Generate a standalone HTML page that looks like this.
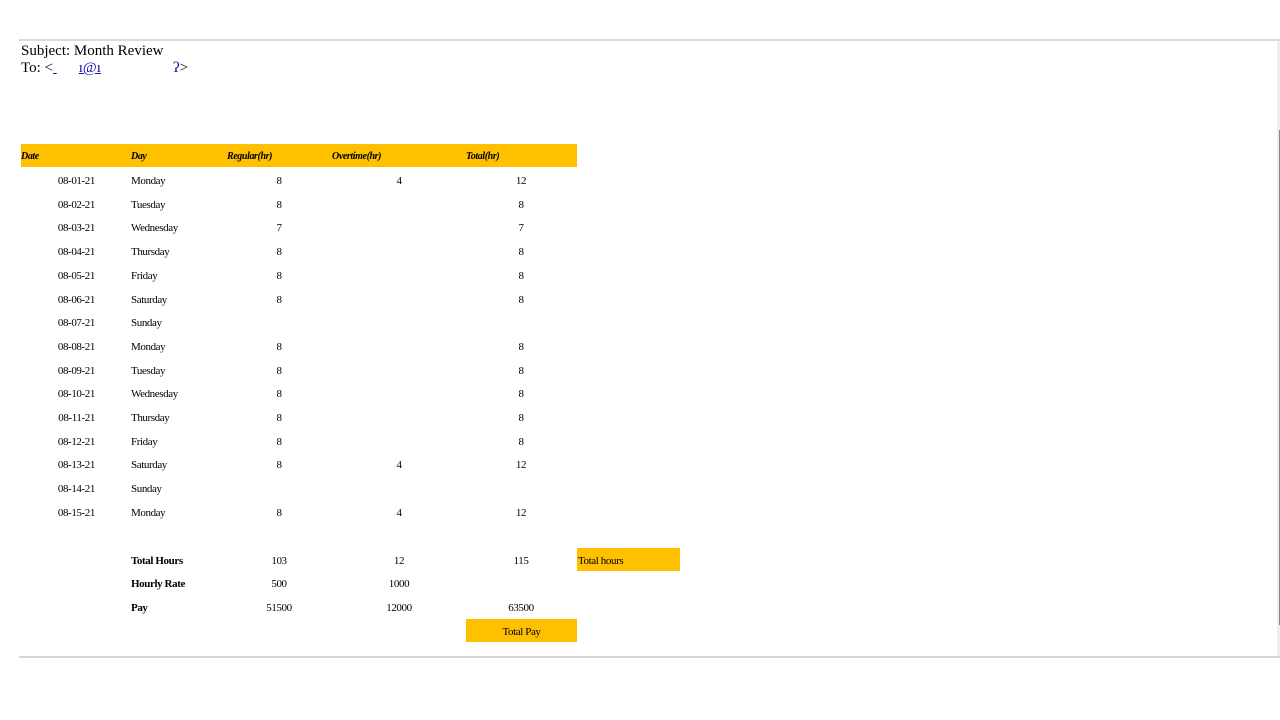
<!DOCTYPE html>
<html><head><meta charset="utf-8"><style>
body{margin:0;width:1280px;height:720px;background:#fff;position:relative;overflow:hidden;font-family:"Liberation Serif",serif;color:#000}
.a{position:absolute;white-space:nowrap;font-size:11px;line-height:14px;letter-spacing:-0.4px}
.r{text-align:right}.c{text-align:center}
.bar{position:absolute;background:#ffc000}
.h{font-weight:bold;font-style:italic;font-size:10px}
.b{font-weight:bold}
</style></head><body>
<div style="position:absolute;left:19px;top:39px;width:1261px;height:2px;background:#e2d8da"></div>
<div style="position:absolute;left:19px;top:656px;width:1261px;height:2px;background:#d4d4d4"></div>
<div style="position:absolute;left:1277px;top:41px;width:3px;height:615px;background:#eee"></div>
<div style="position:absolute;left:1279px;top:130px;width:1px;height:495px;background:#888"></div>
<div class="a" style="left:21px;top:43px;font-size:15px;line-height:17px;letter-spacing:0">Subject: Month Review</div>
<div class="a" style="left:21px;top:60px;font-size:15px;line-height:17px;letter-spacing:0">To: &lt;<span style="color:#1a0dab;text-decoration:underline">&nbsp;</span><span style="display:inline-block;width:22px"></span><span style="color:#1a0dab;text-decoration:underline">ı@ı</span><span style="display:inline-block;width:72px"></span><span style="color:#1a0dab">ʔ</span>&gt;</div>
<div class="bar" style="left:21px;top:144px;width:556px;height:23px"></div>
<div class="a h" style="left:21px;top:150px">Date</div>
<div class="a h" style="left:131px;top:150px">Day</div>
<div class="a h" style="left:227px;top:150px">Regular(hr)</div>
<div class="a h" style="left:332px;top:150px">Overtime(hr)</div>
<div class="a h" style="left:466px;top:150px">Total(hr)</div>
<div id="rows"></div>
<div class="bar" style="left:577px;top:548px;width:103px;height:23px"></div>
<div class="a" style="left:578px;top:554px">Total hours</div>
<div class="bar" style="left:466px;top:619px;width:111px;height:23px"></div>
<div class="a c" style="left:466px;top:625px;width:111px">Total Pay</div>
<div class="a b" style="left:131px;top:554px">Total Hours</div>
<div class="a c" style="left:249px;top:554px;width:60px">103</div>
<div class="a c" style="left:369px;top:554px;width:60px">12</div>
<div class="a c" style="left:491px;top:554px;width:60px">115</div>
<div class="a b" style="left:131px;top:577px">Hourly Rate</div>
<div class="a c" style="left:249px;top:577px;width:60px">500</div>
<div class="a c" style="left:369px;top:577px;width:60px">1000</div>
<div class="a b" style="left:131px;top:601px">Pay</div>
<div class="a c" style="left:249px;top:601px;width:60px">51500</div>
<div class="a c" style="left:369px;top:601px;width:60px">12000</div>
<div class="a c" style="left:491px;top:601px;width:60px">63500</div>
<script>
var d=[["08-01-21","Monday","8","4","12"],["08-02-21","Tuesday","8","","8"],["08-03-21","Wednesday","7","","7"],["08-04-21","Thursday","8","","8"],["08-05-21","Friday","8","","8"],["08-06-21","Saturday","8","","8"],["08-07-21","Sunday","","",""],["08-08-21","Monday","8","","8"],["08-09-21","Tuesday","8","","8"],["08-10-21","Wednesday","8","","8"],["08-11-21","Thursday","8","","8"],["08-12-21","Friday","8","","8"],["08-13-21","Saturday","8","4","12"],["08-14-21","Sunday","","",""],["08-15-21","Monday","8","4","12"]];
var h="";d.forEach(function(r,i){var t=174+i*23.7;
h+='<div class="a r" style="left:35px;width:60px;top:'+t+'px">'+r[0]+'</div>';
h+='<div class="a" style="left:131px;top:'+t+'px">'+r[1]+'</div>';
h+='<div class="a c" style="left:249px;width:60px;top:'+t+'px">'+r[2]+'</div>';
h+='<div class="a c" style="left:369px;width:60px;top:'+t+'px">'+r[3]+'</div>';
h+='<div class="a c" style="left:491px;width:60px;top:'+t+'px">'+r[4]+'</div>';});
document.getElementById("rows").innerHTML=h;
</script>
</body></html>
